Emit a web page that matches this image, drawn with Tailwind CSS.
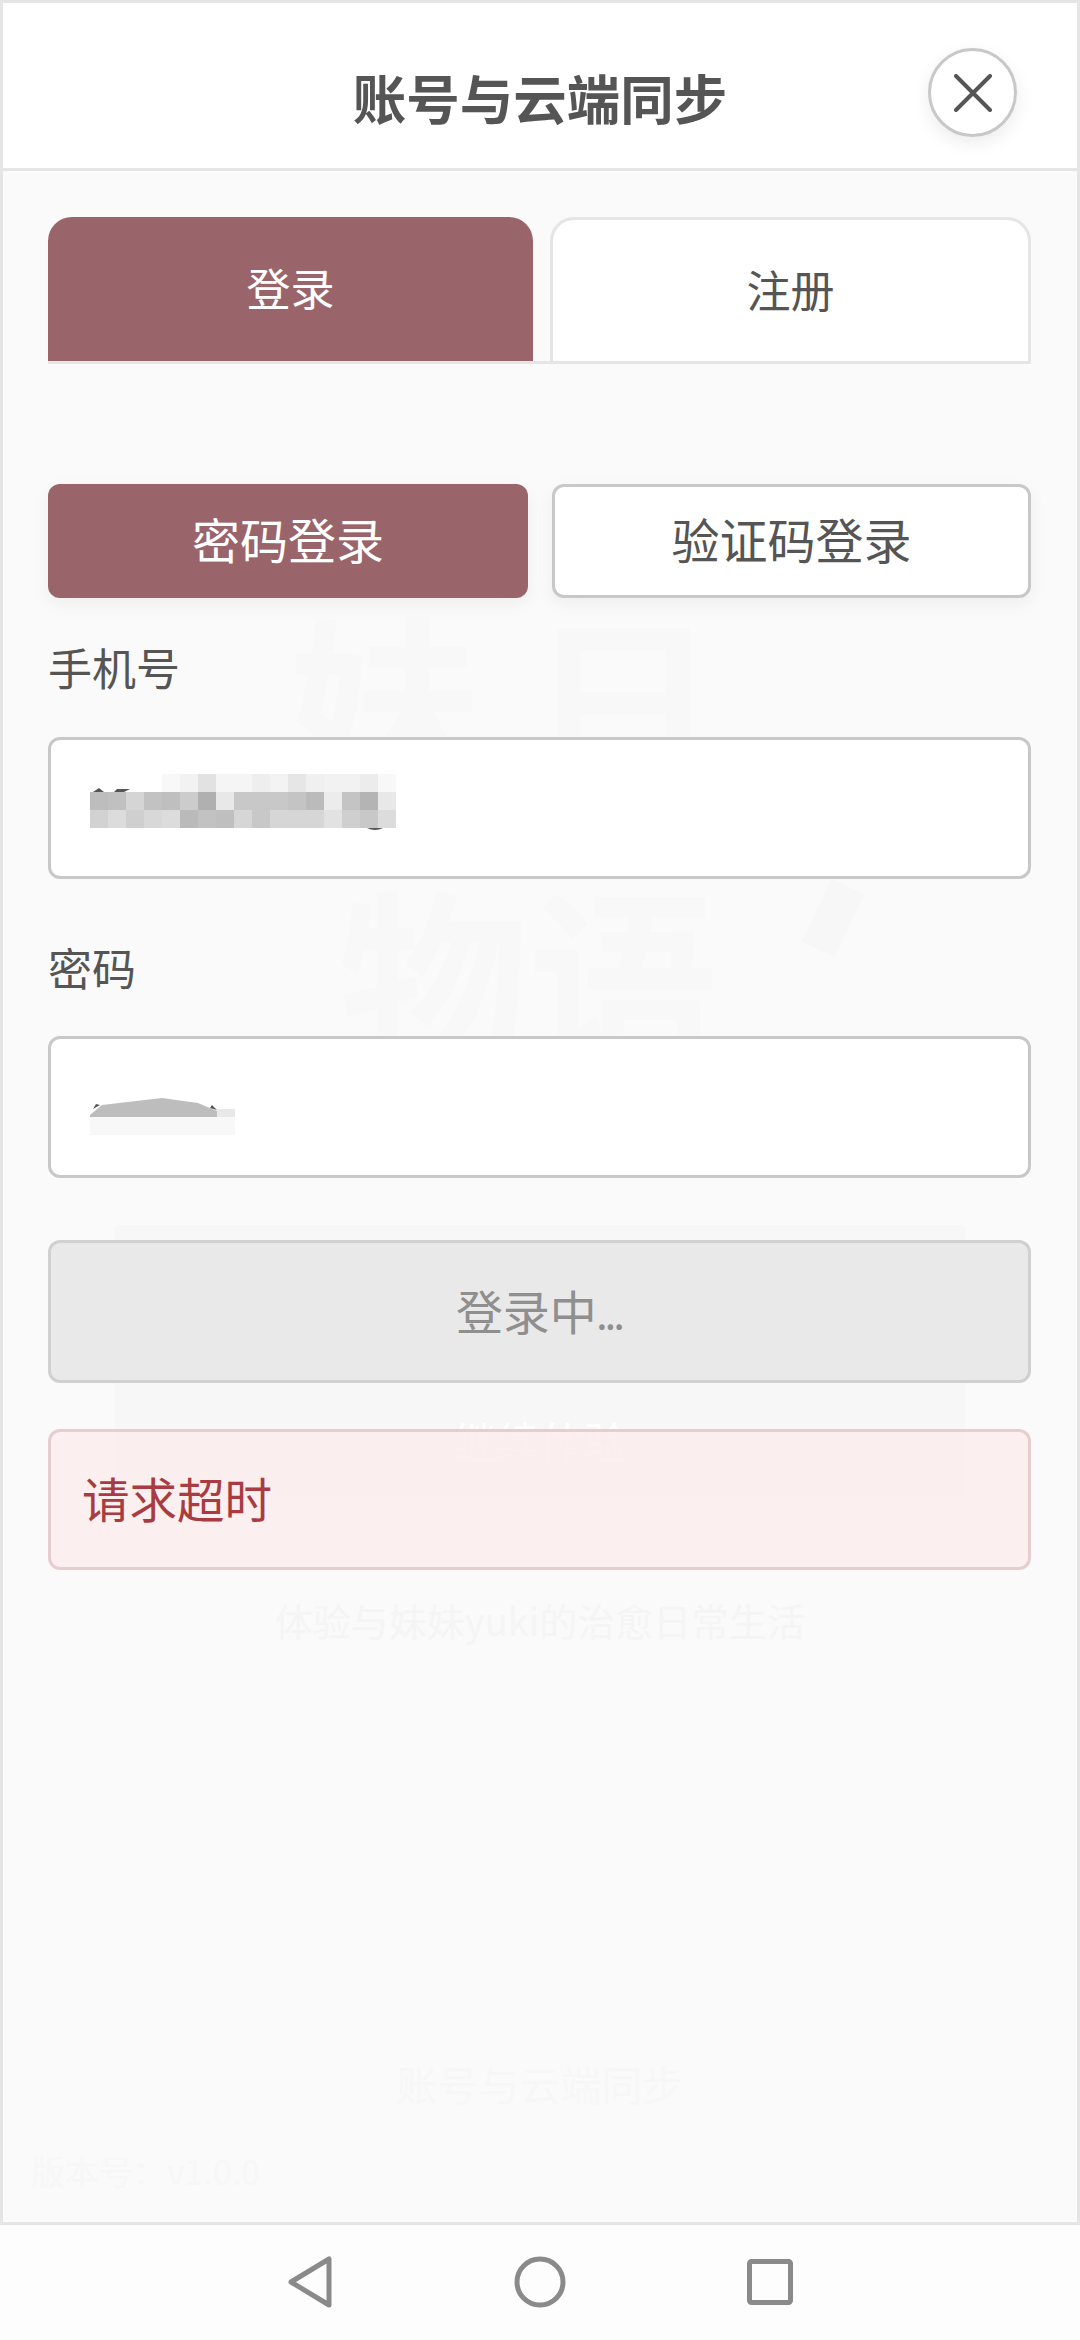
<!DOCTYPE html>
<html lang="zh-CN">
<head>
    <meta charset="UTF-8">
    <meta name="viewport" content="width=device-width, initial-scale=1.0">
    <title>账号与云端同步</title>
    <script src="https://cdn.jsdelivr.net/npm/@tailwindcss/browser@4"></script>
</head>
<body class="bg-[#fdfdfd] font-['Noto_Sans_CJK_SC','Noto_Sans',sans-serif]">
    <div class="w-[1080px] h-[2340px] flex flex-col overflow-hidden">
        <!-- Panel -->
        <div class="h-[2225px] flex flex-col border-[3px] border-[#e5e5e5]">
            <!-- Header -->
            <header class="h-[168px] shrink-0 bg-white border-b-[3px] border-[#e5e5e5] relative flex items-center justify-center">
                <h1 class="text-[53.5px] font-bold text-[#555] leading-none mt-[22px]">账号与云端同步</h1>
                <button class="absolute left-[925px] top-[45px] w-[89px] h-[89px] rounded-full bg-white border-[3px] border-[#c8c8c8] shadow-[0_6px_18px_rgba(0,0,0,0.08)] flex items-center justify-center">
                    <svg width="38" height="38" viewBox="0 0 38 38" fill="none" stroke="#555" stroke-width="4" stroke-linecap="round"><path d="M2 2 L36 36 M36 2 L2 36"/></svg>
                </button>
            </header>

            <!-- Body -->
            <main class="relative flex-1 bg-[#fafafa] pl-[45px] pr-[46px] pt-[46px]">
                <!-- Faded page behind the panel -->
                <div class="absolute inset-0 overflow-hidden">
                    <div class="absolute left-[285px] top-[430px] flex gap-[50px] text-[190px] font-bold leading-none text-[#f8f8f8]"><span>妹</span><span>日</span></div>
                    <div class="absolute left-[335px] top-[705px] text-[190px] font-bold leading-none text-[#f8f8f8]">物语</div>
                    <div class="absolute left-[812px] top-[712px] w-[36px] h-[70px] rotate-[25deg] bg-[#f7f7f7]"></div>
                    <div class="absolute left-[112px] top-[1054px] w-[850px] h-[270px] bg-[#f7f7f7] rounded-[4px]"></div>
                    <div class="absolute left-0 right-0 top-[1240px] text-center text-[44px] leading-[60px] text-white">继续体验</div>
                    <div class="absolute left-0 right-0 top-[1419px] text-center text-[38px] leading-[60px] text-[#f5f5f5]">体验与妹妹yuki的治愈日常生活</div>
                    <div class="absolute left-0 right-0 top-[1882px] text-center text-[41px] leading-[60px] text-[#f7f7f7]">账号与云端同步</div>
                    <div class="absolute left-[28px] top-[1970px] text-[34px] leading-[60px] text-[#f7f7f7]">版本号：v1.0.0</div>
                </div>

                <div class="relative">
                    <!-- Login / register tabs -->
                    <div class="flex h-[147px] gap-[17px] border-b-[3px] border-[#e5e5e5]">
                        <button class="w-[485px] bg-[#9a656a] text-white rounded-t-[24px] text-[44px] leading-none pb-[4px]">登录</button>
                        <button class="w-[481px] bg-white text-[#555] border-[3px] border-b-0 border-[#e5e5e5] rounded-t-[24px] text-[44px] leading-none pb-[4px]">注册</button>
                    </div>

                    <!-- Login mode -->
                    <div class="flex gap-[24px] mt-[120px] h-[114px]">
                        <button class="w-[480px] bg-[#9a656a] text-white rounded-[12px] text-[48px] leading-none pb-[6px] shadow-[0_6px_18px_rgba(0,0,0,0.05)]">密码登录</button>
                        <button class="w-[479px] bg-white text-[#555] border-[3px] border-[#c8c8c8] rounded-[12px] text-[48px] leading-none pb-[6px] shadow-[0_6px_18px_rgba(0,0,0,0.05)]">验证码登录</button>
                    </div>

                    <!-- Phone -->
                    <label class="block mt-[39px] mb-[40px] text-[44px] leading-[60px] text-[#555]">手机号</label>
                    <div class="relative h-[142px] bg-white border-[3px] border-[#c8c8c8] rounded-[12px]">
                        <svg class="absolute left-[39px] top-[20px]" width="360" height="90" viewBox="0 0 360 90">
                            <path d="M3 32 L9 28 L14 32 Z M24 32 L27 29 L40 29 L34 32 Z" fill="#555"/>
                            <path d="M277 68 Q285 72 293 68 Z" fill="#555"/>
                        </svg>
                        <div class="absolute left-[39px] top-[34px] grid grid-cols-[repeat(17,18px)] grid-rows-[repeat(3,18px)]">
                            <div></div><div></div><div></div><div></div>
                            <div class="bg-[#f8f8f8]"></div><div class="bg-[#f2f2f2]"></div><div class="bg-[#e2e2e2]"></div><div class="bg-[#f5f5f5]"></div><div class="bg-[#f5f5f5]"></div><div class="bg-[#eeeeee]"></div><div class="bg-[#f3f3f3]"></div><div class="bg-[#e6e6e6]"></div><div class="bg-[#f0f0f0]"></div><div class="bg-[#f2f2f2]"></div><div class="bg-[#f2f2f2]"></div><div class="bg-[#ececec]"></div><div class="bg-[#f8f8f8]"></div>
                            <div class="bg-[#bdbdbd]"></div><div class="bg-[#c0c0c0]"></div><div class="bg-[#d5d5d5]"></div><div class="bg-[#c2c2c2]"></div><div class="bg-[#bfbfbf]"></div><div class="bg-[#cccccc]"></div><div class="bg-[#b0b0b0]"></div><div class="bg-[#e8e8e8]"></div><div class="bg-[#c8c8c8]"></div><div class="bg-[#c8c8c8]"></div><div class="bg-[#c8c8c8]"></div><div class="bg-[#c4c4c4]"></div><div class="bg-[#bbbbbb]"></div><div class="bg-[#ececec]"></div><div class="bg-[#c4c4c4]"></div><div class="bg-[#b4b4b4]"></div><div class="bg-[#e8e8e8]"></div>
                            <div class="bg-[#d2d2d2]"></div><div class="bg-[#dcdcdc]"></div><div class="bg-[#cfcfcf]"></div><div class="bg-[#d8d8d8]"></div><div class="bg-[#dcdcdc]"></div><div class="bg-[#bababa]"></div><div class="bg-[#c2c2c2]"></div><div class="bg-[#bfbfbf]"></div><div class="bg-[#d6d6d6]"></div><div class="bg-[#c8c8c8]"></div><div class="bg-[#d6d6d6]"></div><div class="bg-[#d6d6d6]"></div><div class="bg-[#d6d6d6]"></div><div class="bg-[#e2e2e2]"></div><div class="bg-[#cfcfcf]"></div><div class="bg-[#c8c8c8]"></div><div class="bg-[#dcdcdc]"></div>
                        </div>
                    </div>

                    <!-- Password -->
                    <label class="block mt-[58px] mb-[39px] text-[44px] leading-[60px] text-[#555]">密码</label>
                    <div class="relative h-[142px] bg-white border-[3px] border-[#c8c8c8] rounded-[12px]">
                        <svg class="absolute left-[39px] top-[56px]" width="150" height="80" viewBox="0 0 150 80">
                            <path d="M0 20 L0 22 L127 22 L127 16 L108 8 L72 3 L12 10 Z" fill="#bdbdbd"/>
                            <rect x="127" y="14" width="18" height="8" fill="#e8e8e8"/>
                            <rect x="0" y="22" width="145" height="18" fill="#f8f8f8"/>
                            <path d="M6 9 L3 14 L10 10 Z M122 10 L127 15 L120 13 Z" fill="#555"/>
                        </svg>
                    </div>

                    <!-- Submit -->
                    <button class="block w-full h-[143px] mt-[62px] bg-[#e9e9e9] border-[3px] border-[#d0d0d0] rounded-[12px] text-[#8f8f8f] text-[47px] leading-none pb-[4px]" disabled>登录中<span class="text-[30px] font-bold tracking-[-1px]">...</span></button>

                    <!-- Error -->
                    <div class="h-[141px] mt-[46px] pl-[31px] pb-[4px] flex items-center bg-[#fbecec]/85 border-[3px] border-[#e8cdcf] rounded-[12px] text-[#a83c42] text-[47.5px] leading-none">请求超时</div>
                </div>
            </main>
        </div>

        <!-- System nav bar -->
        <nav class="flex-1 bg-[#fdfdfd] flex items-center justify-center gap-[181px] pb-[2px]">
            <svg width="46" height="52" viewBox="0 0 46 52" fill="none" stroke="#8a8a8a" stroke-width="5" stroke-linejoin="round"><path d="M42 3 L42 49 L4 26 Z"/></svg>
            <svg width="52" height="52" viewBox="0 0 52 52" fill="none" stroke="#8a8a8a" stroke-width="5"><circle cx="26" cy="26" r="23"/></svg>
            <svg width="46" height="46" viewBox="0 0 46 46" fill="none" stroke="#8a8a8a" stroke-width="5" stroke-linejoin="round"><rect x="2.5" y="2.5" width="41" height="41" rx="2"/></svg>
        </nav>
    </div>
</body>
</html>
